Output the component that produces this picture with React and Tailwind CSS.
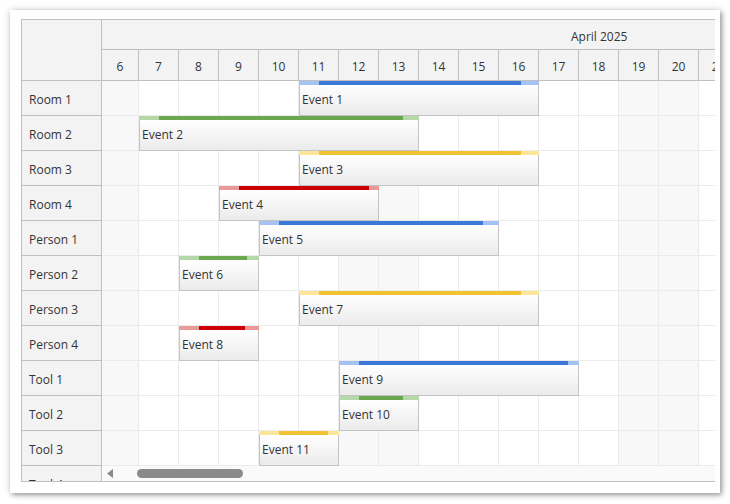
import React from "react";

const days = [6, 7, 8, 9, 10, 11, 12, 13, 14, 15, 16, 17, 18, 19, 20, 21];
const weekend = [6, 12, 13, 19, 20];
const rows = [
  "Room 1", "Room 2", "Room 3", "Room 4",
  "Person 1", "Person 2", "Person 3", "Person 4",
  "Tool 1", "Tool 2", "Tool 3",
];

const palette = {
  blue: { dark: "bg-[#3c78d8]", light: "bg-[#a4c2f4]" },
  green: { dark: "bg-[#6aa84f]", light: "bg-[#b6d7a8]" },
  yellow: { dark: "bg-[#f1c232]", light: "bg-[#ffe599]" },
  red: { dark: "bg-[#cc0000]", light: "bg-[#ea9999]" },
};

const events = [
  { row: 0, name: "Event 1", start: 11, len: 6, color: "blue", end: 222 },
  { row: 1, name: "Event 2", start: 7, len: 7, color: "green", end: 264 },
  { row: 2, name: "Event 3", start: 11, len: 6, color: "yellow", end: 222 },
  { row: 3, name: "Event 4", start: 9, len: 4, color: "red", end: 150 },
  { row: 4, name: "Event 5", start: 10, len: 6, color: "blue", end: 224 },
  { row: 5, name: "Event 6", start: 8, len: 2, color: "green", end: 68 },
  { row: 6, name: "Event 7", start: 11, len: 6, color: "yellow", end: 222 },
  { row: 7, name: "Event 8", start: 8, len: 2, color: "red", end: 66 },
  { row: 8, name: "Event 9", start: 12, len: 6, color: "blue", end: 229 },
  { row: 9, name: "Event 10", start: 12, len: 2, color: "green", end: 64 },
  { row: 10, name: "Event 11", start: 10, len: 2, color: "yellow", end: 69 },
];

function EventBox({ ev }) {
  const c = palette[ev.color];
  return (
    <div
      className="absolute top-0 h-[35px] z-10 flex flex-col"
      style={{ left: (ev.start - 6) * 40, width: ev.len * 40 }}
    >
      <div className="h-[4px] flex shrink-0">
        <div className={`w-[20px] ${c.light}`} />
        <div className={c.dark} style={{ width: ev.end - 20 }} />
        <div className={`flex-1 ${c.light}`} />
      </div>
      <div className="flex-1 border-x border-b border-[#c4c4c4] bg-linear-to-b from-white to-[#ebebeb] flex items-center pl-[2px] text-[#333]">
        {ev.name}
      </div>
    </div>
  );
}

export default function App() {
  return (
    <div
      className="w-[730px] h-[504px] bg-white pt-[10px] pl-[10px] text-[12px] text-[#333]"
      style={{ fontFamily: '"Open Sans", "Noto Sans", sans-serif' }}
    >
      <div className="w-[710px] h-[483px] bg-white shadow-[2px_2px_5px_rgba(0,0,0,0.35),0_0_8px_rgba(0,0,0,0.15)] pt-[9px] pl-[11px]">
        <div className="w-[694px] h-[463px] border-l border-t border-b border-[#c0c0c0] flex">
          {/* Row headers */}
          <div className="w-[80px] shrink-0 border-r border-[#c0c0c0] flex flex-col overflow-hidden bg-[#f3f3f3]">
            <div className="h-[61px] shrink-0 border-b border-[#c0c0c0]" />
            {rows.map((r) => (
              <div
                key={r}
                className="h-[35px] shrink-0 border-b border-[#c0c0c0] flex items-center pl-[7px] pt-[3px]"
              >
                {r}
              </div>
            ))}
            <div className="h-[35px] shrink-0 flex items-center pl-[7px] pt-[3px]">
              Tool 4
            </div>
          </div>

          {/* Timeline */}
          <div className="flex-1 overflow-hidden flex flex-col">
            <div className="h-[30px] shrink-0 border-b border-[#c0c0c0] bg-[#f3f3f3] flex items-center pl-[469px] pt-[4px] whitespace-nowrap">
              April 2025
            </div>
            <div className="h-[31px] shrink-0 border-b border-[#c0c0c0] bg-[#f3f3f3] flex ml-[-3px]">
              {days.map((d) => (
                <div
                  key={d}
                  className={`w-[40px] shrink-0 border-r border-[#c0c0c0] flex items-center justify-center pt-[3px] ${
                    d === 6 ? "pl-[3px]" : ""
                  }`}
                >
                  {d}
                </div>
              ))}
            </div>
            {rows.map((r, i) => (
              <div key={r} className="relative h-[35px] shrink-0 flex ml-[-3px]">
                {days.map((d) => (
                  <div
                    key={d}
                    className={`w-[40px] shrink-0 border-r border-b border-[#ebebeb] ${
                      weekend.includes(d) ? "bg-[#f8f8f8]" : "bg-white"
                    }`}
                  />
                ))}
                {events
                  .filter((e) => e.row === i)
                  .map((e) => (
                    <EventBox key={e.name} ev={e} />
                  ))}
              </div>
            ))}
            <div className="h-[15px] shrink-0 bg-[#fafafa] relative">
              <svg
                className="absolute left-[5px] top-[3px]"
                width="7"
                height="9"
                viewBox="0 0 7 9"
              >
                <polygon points="6,0 6,9 0,4.5" fill="#8a8a8a" />
              </svg>
              <div className="absolute left-[35px] top-[3px] w-[106px] h-[9px] rounded-full bg-[#8a8a8a]" />
            </div>
          </div>
        </div>
      </div>
    </div>
  );
}
